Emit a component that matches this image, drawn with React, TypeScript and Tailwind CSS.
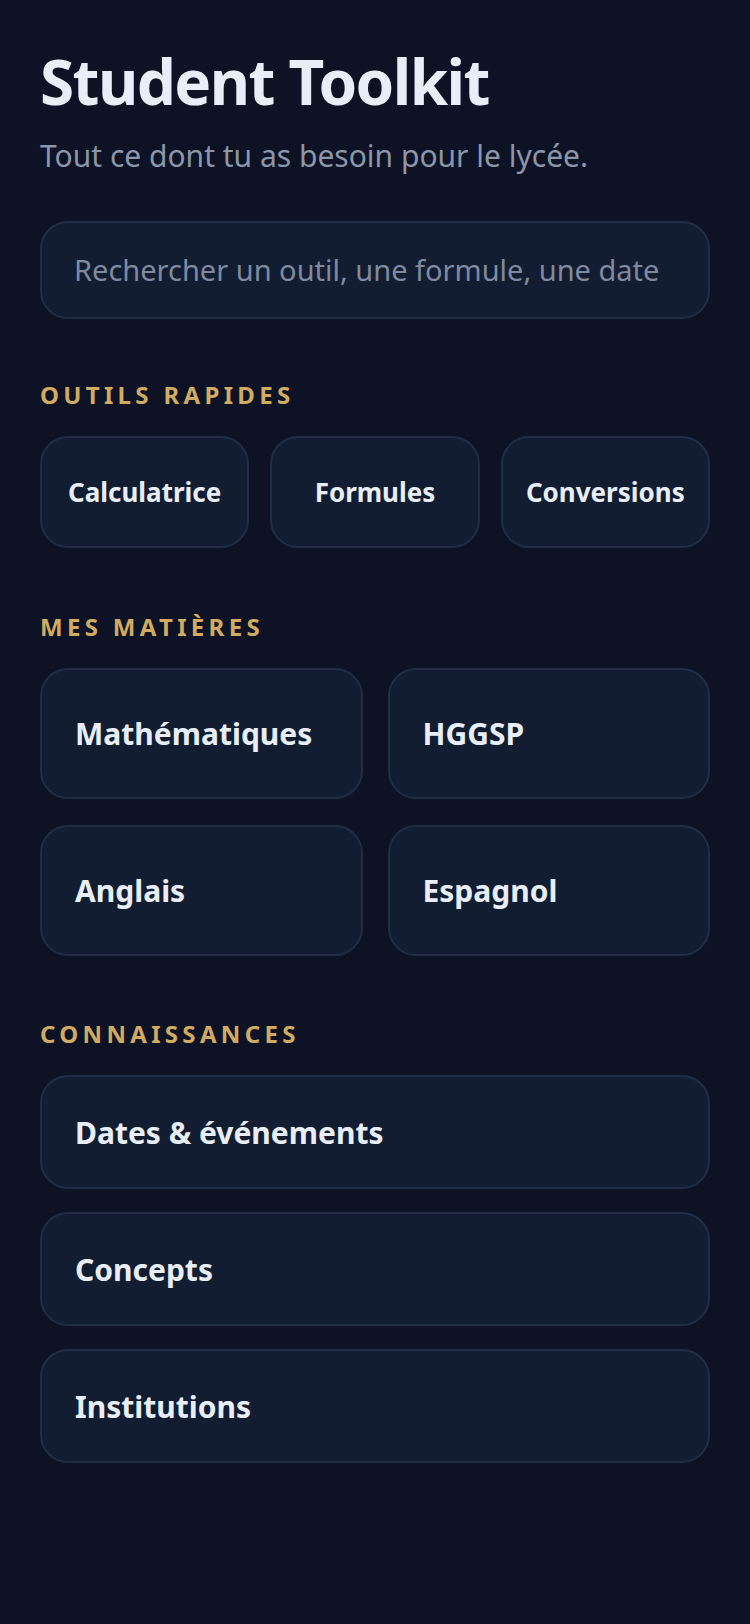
const font = { fontFamily: '"Noto Sans", "Open Sans", sans-serif' };

const quickTools = ['Calculatrice', 'Formules', 'Conversions'];
const subjects = ['Mathématiques', 'HGGSP', 'Anglais', 'Espagnol'];
const knowledge = ['Dates & événements', 'Concepts', 'Institutions'];

const card = 'rounded-[28px] border-2 border-[#212d44] bg-[#131d31]';

function SectionLabel({ children }: { children: string }) {
  return (
    <h2 className="mb-[27px] text-[24px] font-bold uppercase leading-[29px] tracking-[0.18em] text-[#d2ab63]">
      {children}
    </h2>
  );
}

export default function App() {
  return (
    <div style={font} className="min-h-[1624px] w-full bg-[#0d1324] px-10 pt-[50px] pb-20 text-[#e8eef8]">
      <h1 className="text-[62px] font-bold leading-none tracking-tight text-[#e8eef8]">Student Toolkit</h1>
      <p className="mt-[26px] text-[30px] leading-[36px] text-[#8b96aa]">Tout ce dont tu as besoin pour le lycée.</p>

      {/* Search */}
      <div className={`${card} mt-[47px] flex h-[98px] items-center px-[32px]`}>
        <span className="whitespace-nowrap text-[29px] text-[#7f8aa0]">Rechercher un outil, une formule, une date</span>
      </div>

      {/* Outils rapides */}
      <section className="mt-[61px]">
        <SectionLabel>Outils rapides</SectionLabel>
        <div className="grid grid-cols-3 gap-[21px]">
          {quickTools.map((t) => (
            <div key={t} className={`${card} flex h-[112px] items-center justify-center`}>
              <span className="text-[26px] font-bold">{t}</span>
            </div>
          ))}
        </div>
      </section>

      {/* Mes matières */}
      <section className="mt-[64px]">
        <SectionLabel>Mes matières</SectionLabel>
        <div className="grid grid-cols-2 gap-x-[25px] gap-y-[26px]">
          {subjects.map((s) => (
            <div key={s} className={`${card} flex h-[131px] items-center px-[33px]`}>
              <span className="text-[30px] font-bold">{s}</span>
            </div>
          ))}
        </div>
      </section>

      {/* Connaissances */}
      <section className="mt-[63px]">
        <SectionLabel>Connaissances</SectionLabel>
        <div className="flex flex-col gap-[23px]">
          {knowledge.map((k) => (
            <div key={k} className={`${card} flex h-[114px] items-center px-[33px]`}>
              <span className="text-[30px] font-bold">{k}</span>
            </div>
          ))}
        </div>
      </section>
    </div>
  );
}
